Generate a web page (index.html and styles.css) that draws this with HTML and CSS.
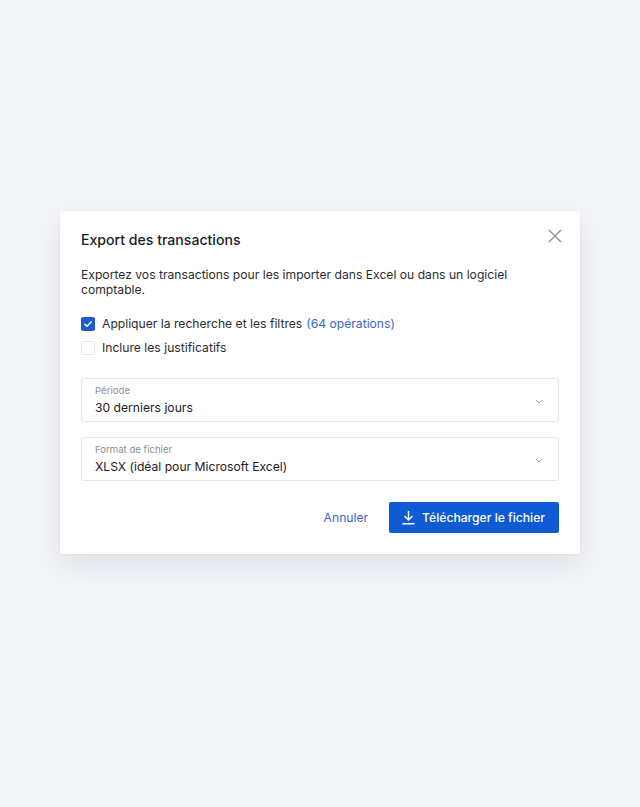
FILE: index.html
```html
<!DOCTYPE html>
<html lang="fr">
<head>
    <meta charset="UTF-8">
    <title>Export des transactions</title>
    <link rel="stylesheet" href="styles.css">
</head>
<body>

<div class="modal">

    <div class="modal-head">
        <h1>Export des transactions</h1>
        <button class="btn-close" aria-label="Fermer">
            <svg width="14" height="14" viewBox="0 0 14 14"><path d="M1 1L13 13M13 1L1 13" stroke="#8a8d93" stroke-width="1.3" fill="none"/></svg>
        </button>
    </div>

    <p class="desc">Exportez vos transactions pour les importer dans Excel ou dans un logiciel comptable.</p>

    <div class="options">
        <label class="check">
            <span class="box checked">
                <svg width="10" height="10" viewBox="0 0 10 10"><path d="M1.8 5.2L4 7.3L8.3 2.8" stroke="#fff" stroke-width="1.4" fill="none" stroke-linecap="round" stroke-linejoin="round"/></svg>
            </span>
            Appliquer la recherche et les filtres <span class="link">(64 opérations)</span>
        </label>
        <label class="check">
            <span class="box"></span>
            Inclure les justificatifs
        </label>
    </div>

    <div class="select">
        <div>
            <div class="select-label">Période</div>
            <div class="select-value">30 derniers jours</div>
        </div>
        <svg class="chevron" width="8" height="5" viewBox="0 0 8 5"><path d="M0.8 0.8L4 4L7.2 0.8" stroke="#a0a3a8" stroke-width="1" fill="none"/></svg>
    </div>

    <div class="select">
        <div>
            <div class="select-label">Format de fichier</div>
            <div class="select-value">XLSX (idéal pour Microsoft Excel)</div>
        </div>
        <svg class="chevron" width="8" height="5" viewBox="0 0 8 5"><path d="M0.8 0.8L4 4L7.2 0.8" stroke="#a0a3a8" stroke-width="1" fill="none"/></svg>
    </div>

    <div class="actions">
        <button class="btn btn-link">Annuler</button>
        <button class="btn btn-primary">
            <svg width="15" height="15" viewBox="0 0 15 15"><path d="M7.5 1V10M3.5 6L7.5 10L11.5 6M1.5 13.8H13.5" stroke="#fff" stroke-width="1.4" fill="none"/></svg>
            Télécharger le fichier
        </button>
    </div>

</div>

</body>
</html>
```

FILE: styles.css
```css
body { margin: 0; padding: 211px 60px 0; background: #f3f4f8; font-family: Inter, "Noto Sans", sans-serif; color: #1f2023; min-height: 807px; box-sizing: border-box; }
.modal { background: #fff; border-radius: 2px; padding: 20px 21px 21px; box-shadow: 0 12px 28px rgba(20,30,60,0.08), 0 1px 3px rgba(20,30,60,0.04); }
.modal-head { display: flex; justify-content: space-between; align-items: flex-start; }
h1 { margin: 0; font-size: 14.1px; font-weight: 500; line-height: 18px; color: #1b1c1f; }
.btn-close { background: none; border: none; padding: 0; margin: -2px -3px 0 0; cursor: pointer; width: 14px; height: 14px; }
.desc { margin: 18px 0 0; font-size: 12.15px; line-height: 15px; color: #2b2c30; }
.options { margin-top: 17px; display: flex; flex-direction: column; gap: 4px; }
.check { display: flex; align-items: center; gap: 7px; font-size: 12.15px; line-height: 20px; color: #2b2c30; }
.box { width: 12px; height: 12px; border: 1px solid #e1e3e7; border-radius: 2px; display: flex; align-items: center; justify-content: center; }
.box.checked { background: #1d5bd1; border-color: #1d5bd1; }
.link { color: #3a68c9; margin-left: -3px; }
.select { margin-top: 15px; border: 1px solid #e4e6ea; border-radius: 3px; height: 42px; padding: 0 15px 0 13px; display: flex; align-items: center; justify-content: space-between; }
.options + .select { margin-top: 20px; }
.select-label { font-size: 9.6px; line-height: 12px; color: #8c8f95; }
.select-value { font-size: 12.15px; line-height: 16px; color: #1f2023; margin-top: 3px; }
.chevron { margin-top: 2px; }
.actions { margin-top: 21px; display: flex; justify-content: flex-end; align-items: center; gap: 21px; }
.btn { font-family: inherit; font-size: 12.15px; border: none; cursor: pointer; }
.btn-link { background: none; color: #3a68c9; padding: 0; }
.btn-primary { background: #0f5bd3; color: #fff; height: 31px; border-radius: 2px; padding: 0 14px 0 12px; display: flex; align-items: center; gap: 6px; font-weight: 500; }
```
